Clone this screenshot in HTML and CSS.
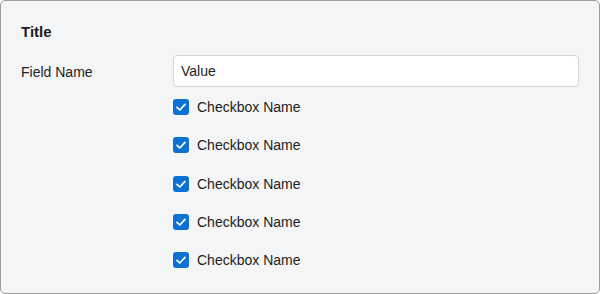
FILE: index.html
```html
<!DOCTYPE html>
<html>
<head>
    <meta charset="utf-8">
    <link rel="stylesheet" href="styles.css">
</head>
<body>
    <div class="panel">
        <div class="panelTitle">Title</div>
        <div class="fieldRow">
            <label class="fieldLabel" for="fieldValue">Field Name</label>
            <input class="fieldInput" id="fieldValue" type="text" value="Value">
        </div>
        <div class="checkList">
            <label class="checkItem">
                <span class="checkBox"><svg viewBox="0 0 16 16" width="16" height="16"><path d="M4 8.3 L6.8 11 L12 5.4" /></svg></span>
                Checkbox Name
            </label>
            <label class="checkItem">
                <span class="checkBox"><svg viewBox="0 0 16 16" width="16" height="16"><path d="M4 8.3 L6.8 11 L12 5.4" /></svg></span>
                Checkbox Name
            </label>
            <label class="checkItem">
                <span class="checkBox"><svg viewBox="0 0 16 16" width="16" height="16"><path d="M4 8.3 L6.8 11 L12 5.4" /></svg></span>
                Checkbox Name
            </label>
            <label class="checkItem">
                <span class="checkBox"><svg viewBox="0 0 16 16" width="16" height="16"><path d="M4 8.3 L6.8 11 L12 5.4" /></svg></span>
                Checkbox Name
            </label>
            <label class="checkItem">
                <span class="checkBox"><svg viewBox="0 0 16 16" width="16" height="16"><path d="M4 8.3 L6.8 11 L12 5.4" /></svg></span>
                Checkbox Name
            </label>
        </div>
    </div>
</body>
</html>
```

FILE: styles.css
```css
body {
    margin: 0;
    font-family: "Liberation Sans", Arial, sans-serif;
    color: #222;
}

.panel {
    box-sizing: border-box;
    height: 294px;
    padding: 21px 20px 0 20px;
    border: 1px solid #9c9c9c;
    border-radius: 5px;
    background-color: #f4f5f7;
}

.panelTitle {
    font-size: 15px;
    font-weight: bold;
    line-height: 20px;
    color: #1d1d1d;
}

.fieldRow {
    display: grid;
    grid-template-columns: 152px 1fr;
    align-items: center;
    margin-top: 13px;
}

.fieldLabel {
    font-size: 14px;
    line-height: 20px;
    padding-top: 2px;
}

.fieldInput {
    box-sizing: border-box;
    height: 32px;
    padding: 0 7px;
    border: 1px solid #d4d4d4;
    border-radius: 4px;
    background-color: #fff;
    font-family: inherit;
    font-size: 14px;
    color: #222;
}

.checkList {
    display: flex;
    flex-direction: column;
    margin-left: 152px;
    padding-top: 1px;
}

.checkItem {
    display: flex;
    align-items: center;
    gap: 8px;
    height: 38.25px;
    font-size: 14px;
}

.checkBox {
    display: flex;
    width: 16px;
    height: 16px;
    border-radius: 3px;
    background-color: #0b72d4;
}

.checkBox path {
    fill: none;
    stroke: #fff;
    stroke-width: 1.7;
    stroke-linecap: round;
    stroke-linejoin: round;
}
```
